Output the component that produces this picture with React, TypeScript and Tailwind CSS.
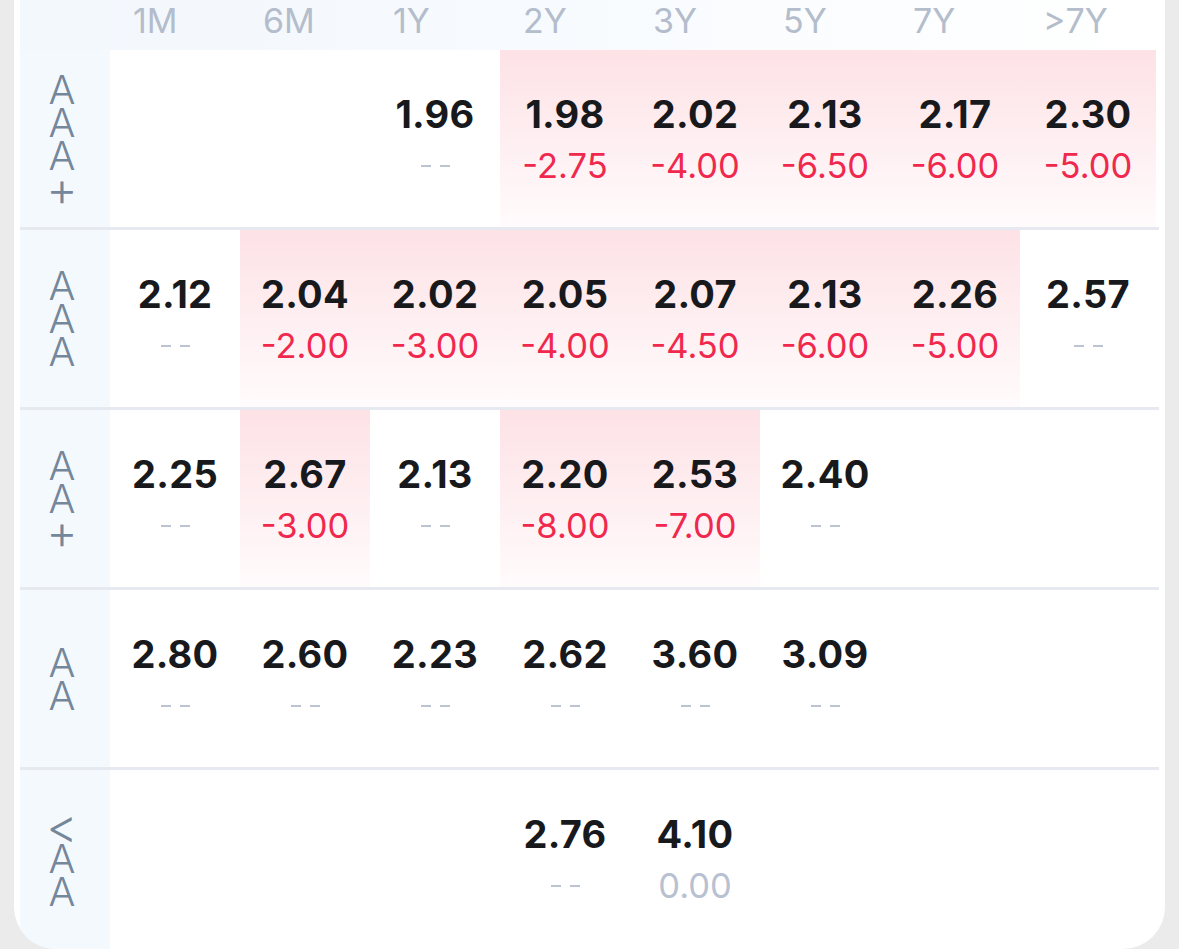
import React from "react";

type Cell = { v: string; d: string; hi?: boolean } | null;

const headers = ["1M", "6M", "1Y", "2Y", "3Y", "5Y", "7Y", ">7Y"];

const rows: { label: string; cells: Cell[] }[] = [
  {
    label: "AAA+",
    cells: [
      null,
      null,
      { v: "1.96", d: "--" },
      { v: "1.98", d: "-2.75", hi: true },
      { v: "2.02", d: "-4.00", hi: true },
      { v: "2.13", d: "-6.50", hi: true },
      { v: "2.17", d: "-6.00", hi: true },
      { v: "2.30", d: "-5.00", hi: true },
    ],
  },
  {
    label: "AAA",
    cells: [
      { v: "2.12", d: "--" },
      { v: "2.04", d: "-2.00", hi: true },
      { v: "2.02", d: "-3.00", hi: true },
      { v: "2.05", d: "-4.00", hi: true },
      { v: "2.07", d: "-4.50", hi: true },
      { v: "2.13", d: "-6.00", hi: true },
      { v: "2.26", d: "-5.00", hi: true },
      { v: "2.57", d: "--" },
    ],
  },
  {
    label: "AA+",
    cells: [
      { v: "2.25", d: "--" },
      { v: "2.67", d: "-3.00", hi: true },
      { v: "2.13", d: "--" },
      { v: "2.20", d: "-8.00", hi: true },
      { v: "2.53", d: "-7.00", hi: true },
      { v: "2.40", d: "--" },
      null,
      null,
    ],
  },
  {
    label: "AA",
    cells: [
      { v: "2.80", d: "--" },
      { v: "2.60", d: "--" },
      { v: "2.23", d: "--" },
      { v: "2.62", d: "--" },
      { v: "3.60", d: "--" },
      { v: "3.09", d: "--" },
      null,
      null,
    ],
  },
  {
    label: "<AA",
    cells: [
      null,
      null,
      null,
      { v: "2.76", d: "--" },
      { v: "4.10", d: "0.00" },
      null,
      null,
      null,
    ],
  },
];

const font = { fontFamily: "Inter, 'Noto Sans', 'Liberation Sans', sans-serif" };

function DataCell({ cell, last }: { cell: Cell; last: boolean }) {
  const width = last ? "flex-1 mr-[3px]" : "w-[130px] shrink-0";
  if (!cell) return <div className={width} />;
  const isDash = cell.d === "--";
  const isRed = cell.d.startsWith("-") && !isDash;
  return (
    <div
      className={`${width} flex flex-col items-center justify-center pt-[4px] ${
        cell.hi ? "bg-linear-to-b from-[#fde2e6] to-[#fffbfc]" : ""
      }`}
    >
      <div className="text-[38px] leading-[50px] font-bold text-[#18191c] tracking-[0.3px]">{cell.v}</div>
      {isDash ? (
        <div className="h-[53px] flex items-center justify-center gap-[9px]">
          <span className="block w-[10px] h-[2px] bg-[#bcc4d2]" />
          <span className="block w-[10px] h-[2px] bg-[#bcc4d2]" />
        </div>
      ) : (
        <div
          className={`text-[34.5px] leading-[53px] font-normal ${
            isRed ? "text-[#f0284e]" : "text-[#b7c1d1]"
          }`}
        >
          {cell.d}
        </div>
      )}
    </div>
  );
}

export default function App() {
  return (
    <div className="w-[1179px] h-[949px] overflow-hidden bg-[#ebebeb]" style={font}>
      <div className="ml-[14px] w-[1151px] h-[949px] bg-white rounded-b-[42px] overflow-hidden px-[6px] flex flex-col">
        {/* header */}
        <div className="flex h-[50px] shrink-0 bg-linear-to-r from-[#f2f7fd] via-[#f8fbfe] to-white">
          <div className="w-[90px] shrink-0 bg-[#f3f8fd]" />
          {headers.map((h, i) => (
            <div
              key={h}
              className={`${
                i === headers.length - 1 ? "flex-1 mr-[3px]" : "w-[130px] shrink-0"
              } pl-[23px] text-left text-[34px] leading-[41px] text-[#b4bdcb] font-normal`}
            >
              {h}
            </div>
          ))}
        </div>
        {rows.map((r, ri) => (
          <React.Fragment key={r.label}>
            <div className="flex h-[177px] shrink-0">
              <div className="w-[90px] shrink-0 bg-[#f4f9fe] flex flex-col items-center justify-center pr-[6px]">
                {r.label.split("").map((ch, ci) => (
                  <div
                    key={ci}
                    className={`${
                      ch === "+" || ch === "<" ? "text-[48px]" : "text-[40px]"
                    } leading-[33px] font-light text-[#74879b] text-center`}
                  >
                    {ch}
                  </div>
                ))}
              </div>
              {r.cells.map((c, ci) => (
                <DataCell key={ci} cell={c} last={ci === r.cells.length - 1} />
              ))}
            </div>
            {ri < rows.length - 1 && <div className="h-[3px] shrink-0 bg-[#e6eaf0]" />}
          </React.Fragment>
        ))}
        <div className="flex-1 flex">
          <div className="w-[90px] shrink-0 bg-[#f4f9fe]" />
        </div>
      </div>
    </div>
  );
}
